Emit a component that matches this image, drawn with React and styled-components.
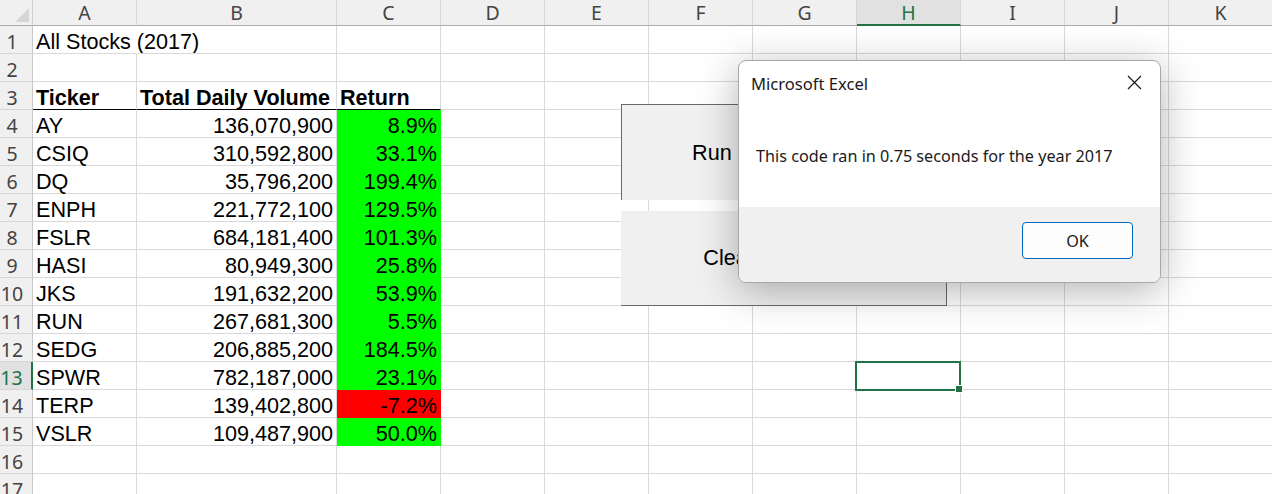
import React from 'react';
import styled, { createGlobalStyle, css } from 'styled-components';

const GlobalStyle = createGlobalStyle`
  html, body {
    margin: 0;
    padding: 0;
    background: #fff;
  }
  body {
    overflow: hidden;
  }
`;

const GREEN = '#217346';
const GRID = '#d9d9d9';

const COLUMNS = ['A', 'B', 'C', 'D', 'E', 'F', 'G', 'H', 'I', 'J', 'K'];
const SELECTED_COL = 'H';
const SELECTED_ROW = 13;

const stocks = [
  ['AY', '136,070,900', '8.9%'],
  ['CSIQ', '310,592,800', '33.1%'],
  ['DQ', '35,796,200', '199.4%'],
  ['ENPH', '221,772,100', '129.5%'],
  ['FSLR', '684,181,400', '101.3%'],
  ['HASI', '80,949,300', '25.8%'],
  ['JKS', '191,632,200', '53.9%'],
  ['RUN', '267,681,300', '5.5%'],
  ['SEDG', '206,885,200', '184.5%'],
  ['SPWR', '782,187,000', '23.1%'],
  ['TERP', '139,402,800', '-7.2%'],
  ['VSLR', '109,487,900', '50.0%'],
];

const Page = styled.div`
  position: relative;
  width: 1272px;
  height: 494px;
  overflow: hidden;
  background: #fff;
`;

const Sheet = styled.div`
  display: grid;
  grid-template-columns: 33px 104px 200px repeat(9, 104px);
  grid-template-rows: 26px;
  grid-auto-rows: 28px;
`;

const Corner = styled.div`
  box-sizing: border-box;
  background: #f0f0f0;
  border-right: 1px solid #d0d0d0;
  border-bottom: 1px solid #ababab;
  display: flex;
  align-items: flex-end;
  justify-content: flex-end;
  padding: 0 3px 3px 0;
`;

const ColHead = styled.div`
  box-sizing: border-box;
  background: ${p => (p.$active ? '#e1e1e1' : '#f0f0f0')};
  border-right: 1px solid #d5d5d5;
  border-bottom: ${p => (p.$active ? `2px solid ${GREEN}` : '1px solid #ababab')};
  color: ${p => (p.$active ? GREEN : '#444')};
  font-family: "Noto Sans", "Open Sans", sans-serif;
  font-size: 19.5px;
  line-height: 25px;
  text-align: center;
`;

const RowHead = styled.div`
  box-sizing: border-box;
  background: ${p => (p.$active ? '#e1e1e1' : '#f0f0f0')};
  border-right: ${p => (p.$active ? `2px solid ${GREEN}` : '1px solid #c8c8c8')};
  border-bottom: 1px solid #d5d5d5;
  color: ${p => (p.$active ? GREEN : '#444')};
  font-family: "Noto Sans", "Open Sans", sans-serif;
  font-size: 19.5px;
  line-height: 25px;
  padding: 3px 8px 0 0;
  text-align: center;
`;

const Cell = styled.div`
  position: relative;
  box-sizing: border-box;
  border-right: 1px solid ${p => p.$fill || (p.$spill ? 'transparent' : GRID)};
  border-bottom: 1px solid ${p => (p.$rule ? '#000' : p.$fill || GRID)};
  background: ${p => p.$fill || 'transparent'};
  font-family: "Liberation Sans", Arial, sans-serif;
  font-size: 21.6px;
  font-weight: ${p => (p.$bold ? 700 : 400)};
  line-height: 26px;
  padding: 3px 3px 0;
  text-align: ${p => p.$align || 'left'};
  white-space: nowrap;
  color: #000;

  ${p => p.$selected && css`
    &::before {
      content: '';
      position: absolute;
      left: -2px;
      top: -1px;
      right: -1px;
      bottom: -2px;
      border: 2px solid ${GREEN};
      z-index: 2;
    }
    &::after {
      content: '';
      position: absolute;
      right: -3px;
      bottom: -4px;
      width: 6px;
      height: 6px;
      background: ${GREEN};
      border: 1px solid #fff;
      z-index: 3;
    }
  `}
`;

const ButtonStack = styled.div`
  position: absolute;
  left: 621px;
  top: 104px;
  width: 326px;
  display: flex;
  flex-direction: column;
  gap: 11px;
`;

const MacroButton = styled.div`
  box-sizing: border-box;
  height: ${p => p.$h}px;
  background: #f0f0f0;
  display: flex;
  align-items: center;
  justify-content: center;
  font-family: "Liberation Sans", Arial, sans-serif;
  font-size: 21.6px;
  color: #000;
  ${p => (p.$pressed
    ? css`
        border-top: 1px solid #6a6a6a;
        border-left: 1px solid #6a6a6a;
      `
    : css`
        border-right: 1px solid #6a6a6a;
        border-bottom: 1px solid #6a6a6a;
      `)}
`;

const Dialog = styled.div`
  position: absolute;
  left: 738px;
  top: 60px;
  width: 423px;
  height: 223px;
  box-sizing: border-box;
  border: 1px solid #a8a8a8;
  border-radius: 8px;
  background: #fff;
  overflow: hidden;
  display: flex;
  flex-direction: column;
  box-shadow: 0 8px 40px rgba(0, 0, 0, 0.3);
  font-family: "Noto Sans", "Open Sans", sans-serif;
  color: #1a1a1a;
`;

const TitleBar = styled.div`
  height: 45px;
  display: flex;
  align-items: center;
  justify-content: space-between;
  padding: 0 18px 0 12px;
  font-size: 16.6px;
`;

const CloseIcon = styled.svg`
  width: 15px;
  height: 15px;
  margin-top: -2px;
`;

const Body = styled.div`
  flex: 1;
  display: flex;
  align-items: center;
  padding: 0 0 2px 17px;
  font-size: 16.2px;
`;

const Footer = styled.div`
  height: 75px;
  background: #f0f0f0;
  display: flex;
  justify-content: flex-end;
  align-items: flex-start;
  padding: 15px 27px 0 0;
  box-sizing: border-box;
`;

const OkButton = styled.button`
  width: 111px;
  height: 37px;
  box-sizing: border-box;
  border: 1px solid #0067c0;
  border-radius: 4px;
  background: #fdfdfd;
  font-family: "Noto Sans", "Open Sans", sans-serif;
  font-size: 16.2px;
  color: #1a1a1a;
  padding: 0;
`;

function CornerMark() {
  return (
    <svg width="14" height="14" viewBox="0 0 14 14">
      <polygon points="14,0 14,14 0,14" fill="#d6d6d6" />
    </svg>
  );
}

function buildRow(r) {
  const cells = {};
  if (r === 1) cells.A = { text: 'All Stocks (2017)', spill: true };
  if (r === 3) {
    cells.A = { text: 'Ticker', bold: true, rule: true };
    cells.B = { text: 'Total Daily Volume', bold: true, rule: true };
    cells.C = { text: 'Return', bold: true, rule: true };
  }
  const s = stocks[r - 4];
  if (s) {
    cells.A = { text: s[0] };
    cells.B = { text: s[1], align: 'right' };
    cells.C = {
      text: s[2],
      align: 'right',
      fill: s[2].startsWith('-') ? '#ff0000' : '#00ff00',
    };
  }
  return cells;
}

export default function App() {
  const rows = Array.from({ length: 17 }, (_, i) => i + 1);
  return (
    <Page>
      <GlobalStyle />
      <Sheet>
        <Corner>
          <CornerMark />
        </Corner>
        {COLUMNS.map(c => (
          <ColHead key={c} $active={c === SELECTED_COL}>{c}</ColHead>
        ))}
        {rows.map(r => {
          const cells = buildRow(r);
          return (
            <React.Fragment key={r}>
              <RowHead $active={r === SELECTED_ROW}>{r}</RowHead>
              {COLUMNS.map(c => {
                const cell = cells[c] || {};
                return (
                  <Cell
                    key={c}
                    $align={cell.align}
                    $bold={cell.bold}
                    $fill={cell.fill}
                    $rule={cell.rule}
                    $spill={cell.spill}
                    $selected={c === SELECTED_COL && r === SELECTED_ROW}
                  >
                    {cell.text}
                  </Cell>
                );
              })}
            </React.Fragment>
          );
        })}
      </Sheet>

      <ButtonStack>
        <MacroButton $h={96} $pressed>Run Stock Analysis</MacroButton>
        <MacroButton $h={95}>Clear Worksheet</MacroButton>
      </ButtonStack>

      <Dialog>
        <TitleBar>
          <span>Microsoft Excel</span>
          <CloseIcon viewBox="0 0 15 15">
            <path d="M1 1 L14 14 M14 1 L1 14" stroke="#1a1a1a" strokeWidth="1.2" fill="none" />
          </CloseIcon>
        </TitleBar>
        <Body>This code ran in 0.75 seconds for the year 2017</Body>
        <Footer>
          <OkButton>OK</OkButton>
        </Footer>
      </Dialog>
    </Page>
  );
}
